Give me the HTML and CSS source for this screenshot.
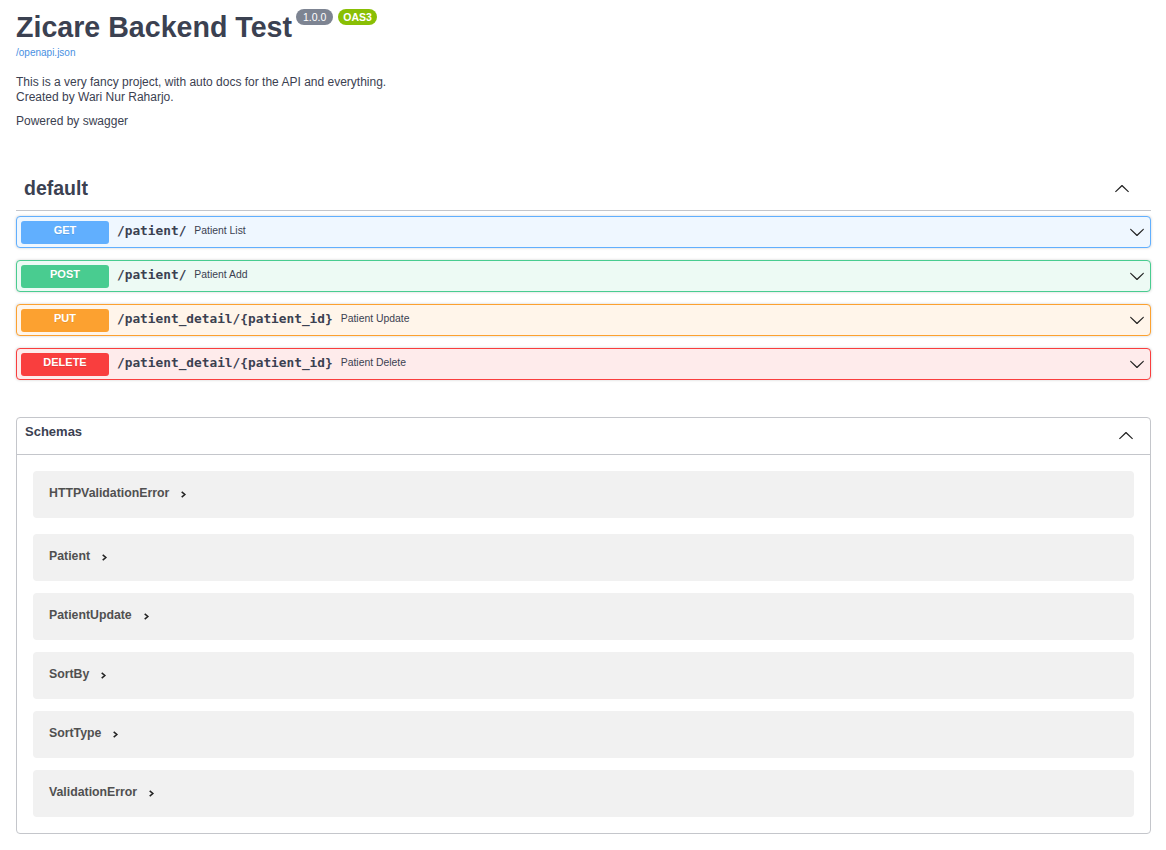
FILE: index.html
```html
<!DOCTYPE html>
<html>
<head>
<meta charset="utf-8">
<link rel="stylesheet" href="styles.css">
</head>
<body>
<div class="wrapper">
  <div class="info">
    <h2 class="title"><span class="title-text">Zicare Backend Test</span><span class="badges"><span class="badge version">1.0.0</span><span class="badge oas">OAS3</span></span></h2>
    <a class="url" href="#">/openapi.json</a>
    <div class="description">
      <p>This is a very fancy project, with auto docs for the API and everything.<br>Created by Wari Nur Raharjo.</p>
      <p>Powered by swagger</p>
    </div>
  </div>

  <div class="tag-section">
    <div class="tag-header">
      <h3 class="tag-name">default</h3>
      <svg class="chev chev-up" viewBox="0 0 20 20" width="16" height="16"><path d="M17.418 6.109c.272-.268.709-.268.979 0s.271.701 0 .969l-7.908 7.83c-.27.268-.707.268-.979 0l-7.908-7.83c-.27-.268-.27-.701 0-.969.271-.268.709-.268.979 0L10 13.250l7.418-7.141z"/></svg>
    </div>
    <div class="opblock get">
      <span class="method">GET</span>
      <span class="path">/patient/</span>
      <span class="summary">Patient List</span>
      <svg class="chev op-chev" viewBox="0 0 20 20" width="16" height="16"><path d="M17.418 6.109c.272-.268.709-.268.979 0s.271.701 0 .969l-7.908 7.83c-.27.268-.707.268-.979 0l-7.908-7.83c-.27-.268-.27-.701 0-.969.271-.268.709-.268.979 0L10 13.25l7.418-7.141z"/></svg>
    </div>
    <div class="opblock post">
      <span class="method">POST</span>
      <span class="path">/patient/</span>
      <span class="summary">Patient Add</span>
      <svg class="chev op-chev" viewBox="0 0 20 20" width="16" height="16"><path d="M17.418 6.109c.272-.268.709-.268.979 0s.271.701 0 .969l-7.908 7.83c-.27.268-.707.268-.979 0l-7.908-7.83c-.27-.268-.27-.701 0-.969.271-.268.709-.268.979 0L10 13.25l7.418-7.141z"/></svg>
    </div>
    <div class="opblock put">
      <span class="method">PUT</span>
      <span class="path">/patient_detail/{patient_id}</span>
      <span class="summary">Patient Update</span>
      <svg class="chev op-chev" viewBox="0 0 20 20" width="16" height="16"><path d="M17.418 6.109c.272-.268.709-.268.979 0s.271.701 0 .969l-7.908 7.83c-.27.268-.707.268-.979 0l-7.908-7.83c-.27-.268-.27-.701 0-.969.271-.268.709-.268.979 0L10 13.25l7.418-7.141z"/></svg>
    </div>
    <div class="opblock delete">
      <span class="method">DELETE</span>
      <span class="path">/patient_detail/{patient_id}</span>
      <span class="summary">Patient Delete</span>
      <svg class="chev op-chev" viewBox="0 0 20 20" width="16" height="16"><path d="M17.418 6.109c.272-.268.709-.268.979 0s.271.701 0 .969l-7.908 7.83c-.27.268-.707.268-.979 0l-7.908-7.83c-.27-.268-.27-.701 0-.969.271-.268.709-.268.979 0L10 13.25l7.418-7.141z"/></svg>
    </div>
  </div>

  <section class="models">
    <div class="models-header">
      <span class="models-title">Schemas</span>
      <svg class="chev chev-up" viewBox="0 0 20 20" width="16" height="16"><path d="M17.418 6.109c.272-.268.709-.268.979 0s.271.701 0 .969l-7.908 7.83c-.27.268-.707.268-.979 0l-7.908-7.83c-.27-.268-.27-.701 0-.969.271-.268.709-.268.979 0L10 13.25l7.418-7.141z"/></svg>
    </div>
    <div class="models-list">
      <div class="model first"><span class="model-name">HTTPValidationError</span><svg class="mchev" viewBox="0 0 10 10" width="9" height="9"><path d="M3 2l3.5 3L3 8" fill="none" stroke="#222" stroke-width="1.7"/></svg></div>
      <div class="model"><span class="model-name">Patient</span><svg class="mchev" viewBox="0 0 10 10" width="9" height="9"><path d="M3 2l3.5 3L3 8" fill="none" stroke="#222" stroke-width="1.7"/></svg></div>
      <div class="model"><span class="model-name">PatientUpdate</span><svg class="mchev" viewBox="0 0 10 10" width="9" height="9"><path d="M3 2l3.5 3L3 8" fill="none" stroke="#222" stroke-width="1.7"/></svg></div>
      <div class="model"><span class="model-name">SortBy</span><svg class="mchev" viewBox="0 0 10 10" width="9" height="9"><path d="M3 2l3.5 3L3 8" fill="none" stroke="#222" stroke-width="1.7"/></svg></div>
      <div class="model"><span class="model-name">SortType</span><svg class="mchev" viewBox="0 0 10 10" width="9" height="9"><path d="M3 2l3.5 3L3 8" fill="none" stroke="#222" stroke-width="1.7"/></svg></div>
      <div class="model"><span class="model-name">ValidationError</span><svg class="mchev" viewBox="0 0 10 10" width="9" height="9"><path d="M3 2l3.5 3L3 8" fill="none" stroke="#222" stroke-width="1.7"/></svg></div>
    </div>
  </section>
</div>
</body>
</html>
```

FILE: styles.css
```css
* { box-sizing: border-box; }
html, body { margin: 0; padding: 0; background: #fff; }
body {
  font-family: "Liberation Sans", Arial, sans-serif;
  color: #3b4151;
}
.wrapper {
  padding: 0 15px 0 16px;
}
.info {
  padding-top: 8px;
}
.title {
  display: flex;
  align-items: flex-start;
  margin: 0;
  font-size: 28.6px;
  font-weight: 700;
  line-height: 38px;
  color: #3b4151;
}
.badges {
  display: flex;
  gap: 5px;
  margin-left: 4px;
  margin-top: 1px;
}
.badge {
  display: block;
  font-size: 10.5px;
  font-weight: 400;
  color: #fff;
  line-height: 16px;
  height: 16px;
  padding: 0 7px;
  border-radius: 8px;
  font-family: "Liberation Sans", Arial, sans-serif;
}
.badge.version { background: #7d8492; }
.badge.oas { background: #89bf04; font-weight: 700; padding: 0 5px; }
.url {
  display: block;
  margin-top: 1px;
  font-size: 10px;
  color: #4990e2;
  text-decoration: none;
}
.description { margin-top: 17px; font-size: 12px; line-height: 15px; }
.description p { margin: 0 0 9px; }

.tag-section { margin-top: 38px; }
.tag-header {
  display: flex;
  align-items: center;
  justify-content: space-between;
  height: 44px;
  padding: 0 21px 0 8px;
  border-bottom: 1px solid #c4c6cb;
  margin-bottom: 5px;
}
.tag-name {
  margin: 0;
  font-size: 19.5px;
  font-weight: 700;
  color: #3b4151;
}
.chev { fill: #222; flex: none; }
.chev-up { transform: rotate(180deg); }

.opblock {
  display: flex;
  align-items: center;
  height: 32px;
  margin-bottom: 12px;
  border: 1px solid;
  border-radius: 4px;
  padding: 0 5px 0 4px;
  box-shadow: 0 0 3px rgba(0,0,0,.19);
}
.method {
  flex: none;
  width: 88px;
  height: 23px;
  line-height: 19px;
  border-radius: 3px;
  color: #fff;
  font-size: 11px;
  font-weight: 700;
  text-align: center;
  text-shadow: 0 1px 0 rgba(0,0,0,.1);
}
.path {
  margin-left: 8px;
  margin-bottom: 3px;
  font-family: "DejaVu Sans Mono", "Liberation Mono", monospace;
  font-weight: 700;
  font-size: 12.8px;
  color: #3b4151;
}
.summary {
  margin-left: 8px;
  margin-bottom: 4px;
  font-size: 10.4px;
  color: #3b4151;
  flex: 1;
}

.opblock.get { background: #eff7ff; border-color: #61affe; }
.opblock.get .method { background: #61affe; }
.opblock.post { background: #edfaf4; border-color: #49cc90; }
.opblock.post .method { background: #49cc90; }
.opblock.put { background: #fff5ea; border-color: #fca130; }
.opblock.put .method { background: #fca130; }
.opblock.delete { background: #feebeb; border-color: #f93e3e; }
.opblock.delete .method { background: #f93e3e; }

.models {
  margin-top: 37px;
  border: 1px solid #c4c6cb;
  border-radius: 4px;
}
.models-header {
  display: flex;
  justify-content: space-between;
  align-items: center;
  height: 37px;
  padding: 0 16px 0 8px;
  border-bottom: 1px solid #c4c6cb;
}
.models-title {
  font-size: 13px;
  font-weight: 700;
  color: #3b4151;
  margin-top: -9px;
}
.models-list { padding: 16px 16px 16px; }
.model {
  display: flex;
  align-items: center;
  height: 47px;
  background: #f1f1f1;
  border-radius: 4px;
  padding-left: 16px;
  margin-bottom: 12px;
}
.model:last-child { margin-bottom: 0; }
.model.first { margin-bottom: 16px; }
.model-name {
  font-size: 12.3px;
  font-weight: 700;
  color: #505050;
  margin-top: -3px;
}
.mchev { margin-left: 10px; }
```
